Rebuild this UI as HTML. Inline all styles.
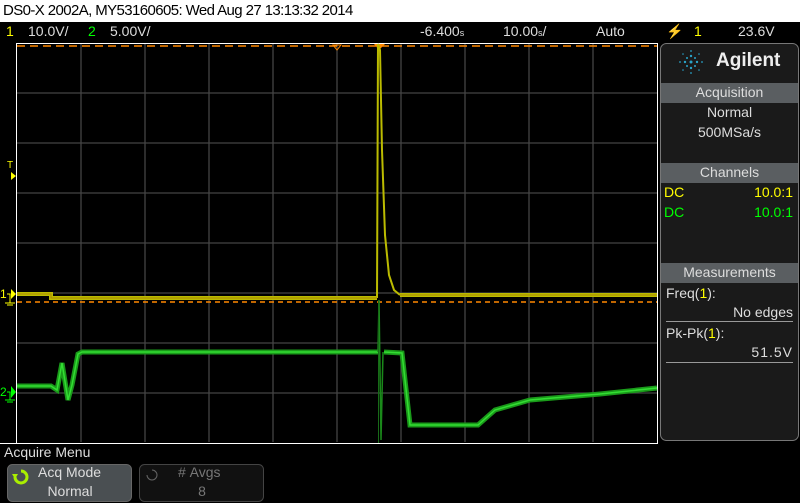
<!DOCTYPE html>
<html><head><style>
body{margin:0;width:800px;height:503px;background:#000;overflow:hidden;font-family:"Liberation Sans",sans-serif;position:relative}
.t{position:absolute;white-space:nowrap}
</style></head><body>
<div style="position:absolute;left:0;top:0;width:800px;height:22px;background:#fff"></div>
<div class="t" style="left:3px;top:2px;font-size:15px;color:#000;letter-spacing:-0.6px">DS0-X 2002A, MY53160605: Wed Aug 27 13:13:32 2014</div>
<div class="t" style="left:6px;top:23px;font-size:14px;color:#ff0">1</div>
<div class="t" style="left:28px;top:23px;font-size:14px;color:#ddd">10.0V/</div>
<div class="t" style="left:88px;top:23px;font-size:14px;color:#0f0">2</div>
<div class="t" style="left:110px;top:23px;font-size:14px;color:#ddd">5.00V/</div>
<div class="t" style="left:420px;top:23px;font-size:14px;color:#ddd">-6.400<span style="font-size:9px">s</span></div>
<div class="t" style="left:503px;top:23px;font-size:14px;color:#ddd">10.00<span style="font-size:9px">s</span>/</div>
<div class="t" style="left:596px;top:23px;font-size:14px;color:#ddd">Auto</div>
<div class="t" style="left:666px;top:23px;font-size:14px;color:#ddd">⚡</div>
<div class="t" style="left:694px;top:23px;font-size:14px;color:#ff0">1</div>
<div class="t" style="left:738px;top:23px;font-size:14px;color:#ddd">23.6V</div>
<svg width="800" height="503" style="position:absolute;left:0;top:0">
<g stroke="#444" stroke-width="1.3">
<line x1="81" y1="44" x2="81" y2="442"/><line x1="145" y1="44" x2="145" y2="442"/><line x1="209" y1="44" x2="209" y2="442"/><line x1="273" y1="44" x2="273" y2="442"/><line x1="401" y1="44" x2="401" y2="442"/><line x1="465" y1="44" x2="465" y2="442"/><line x1="529" y1="44" x2="529" y2="442"/><line x1="593" y1="44" x2="593" y2="442"/>
<line x1="337" y1="44" x2="337" y2="442"/>
<line x1="17" y1="93" x2="657" y2="93"/><line x1="17" y1="143" x2="657" y2="143"/><line x1="17" y1="193" x2="657" y2="193"/><line x1="17" y1="243" x2="657" y2="243"/><line x1="17" y1="293" x2="657" y2="293"/><line x1="17" y1="343" x2="657" y2="343"/><line x1="17" y1="393" x2="657" y2="393"/>
</g>
<line x1="16.5" y1="43" x2="16.5" y2="443" stroke="#fff"/>
<line x1="16" y1="43.5" x2="658" y2="43.5" stroke="#fff"/>
<line x1="0" y1="443.5" x2="658" y2="443.5" stroke="#fff"/>
<line x1="657.5" y1="43" x2="657.5" y2="443" stroke="#fff"/>
<line x1="17" y1="46" x2="657" y2="46" stroke="#f80" stroke-width="1.5" stroke-dasharray="8,5"/>
<line x1="17" y1="302" x2="657" y2="302" stroke="#f80" stroke-width="1.5" stroke-dasharray="5,4"/>
<path d="M333 45 L341 45 L337 50Z" fill="none" stroke="#f80"/>
<path d="M374 44 L385 44 L379 50Z" fill="#f80"/>
<path d="M17 294 L51 294 L51 298 L377 298 M400 295 L657 295" fill="none" stroke="#bb0" stroke-width="4"/>
<path d="M377 298 L378 44 L380 50 L382 150 L385 235 L389 275 L394 290 L400 295" fill="none" stroke="#bb0" stroke-width="2"/>
<path d="M17 294 L51 294 L51 298 L377 298 M400 295 L657 295" fill="none" stroke="#aa8a00" stroke-width="1"/>
<path d="M17 386 L51 386 L57 390 L62 363 L68 400 L72 385 L78 354 L82 352 L378 352 M384 352 L402 353 L410 425 L478 425 L495 410 L530 400 L600 394 L657 388" fill="none" stroke="#1a9a1a" stroke-width="5"/>
<path d="M17 386 L51 386 L57 390 L62 363 L68 400 L72 385 L78 354 L82 352 L378 352 M384 352 L402 353 L410 425 L478 425 L495 410 L530 400 L600 394 L657 388" fill="none" stroke="#3d3" stroke-width="1.5"/>
<path d="M378 352 L379 300 L381 440 L383 352" fill="none" stroke="#1a8a1a" stroke-width="1.5"/>
<line x1="378.5" y1="300" x2="378.5" y2="443" stroke="#186a18" stroke-width="1"/>
<path d="M11 289 L16 294 L11 299Z" fill="#ff0"/><path d="M7 294 H10 V303 M5 303 H15 M7 305 H13" stroke="#ff0" fill="none"/>
<text x="0" y="298" fill="#ff0" font-size="12" font-family="Liberation Sans">1</text>
<path d="M11 386 L16 392 L11 398Z" fill="#0f0"/><path d="M7 392 H10 V400 M5 400 H15 M7 402 H13" stroke="#0f0" fill="none"/>
<text x="0" y="396" fill="#0f0" font-size="12" font-family="Liberation Sans">2</text>
<text x="7" y="168" fill="#ff0" font-size="10" font-family="Liberation Sans">T</text>
<path d="M11 172 L16 176 L11 180Z" fill="#ff0"/>
<rect x="660.5" y="43.5" width="138" height="397" rx="6" fill="#1a1a1a" stroke="#777"/>
<rect x="661" y="83" width="137" height="20" fill="#5a5e61"/>
<rect x="661" y="163" width="137" height="20" fill="#5a5e61"/>
<rect x="661" y="263" width="137" height="20" fill="#5a5e61"/>
<line x1="666" y1="321.5" x2="793" y2="321.5" stroke="#999"/>
<line x1="666" y1="362.5" x2="793" y2="362.5" stroke="#999"/>
<g fill="#29a3c9"><circle cx="691" cy="62" r="1.5"/><circle cx="691" cy="56" r="1.2"/><circle cx="691" cy="68" r="1.2"/><circle cx="685" cy="62" r="1.2"/><circle cx="697" cy="62" r="1.2"/><circle cx="687" cy="58" r="1"/><circle cx="695" cy="58" r="1"/><circle cx="687" cy="66" r="1"/><circle cx="695" cy="66" r="1"/><circle cx="680" cy="62" r="0.9"/><circle cx="702" cy="62" r="0.9"/><circle cx="691" cy="51" r="0.9"/><circle cx="691" cy="73" r="0.9"/><circle cx="683" cy="54" r="0.8"/><circle cx="699" cy="54" r="0.8"/><circle cx="683" cy="70" r="0.8"/><circle cx="699" cy="70" r="0.8"/></g>
<rect x="7.5" y="464.5" width="124" height="37" rx="5" fill="#4a4f52" stroke="#666"/>
<rect x="139.5" y="464.5" width="124" height="37" rx="5" fill="#111" stroke="#444"/>
<path d="M21 471 A6 6 0 1 1 15 477" fill="none" stroke="#ae0" stroke-width="3"/>
<path d="M12 474 L18 474 L15 479Z" fill="#ae0"/>
<path d="M152 470 A5 5 0 1 1 147 475" fill="none" stroke="#666" stroke-width="1"/>
</svg>
<div class="t" style="left:716px;top:50px;font-size:19px;color:#eee;font-weight:bold">Agilent</div>
<div class="t" style="left:661px;top:84px;width:137px;text-align:center;font-size:14px;color:#ddd">Acquisition</div>
<div class="t" style="left:661px;top:104px;width:137px;text-align:center;font-size:14px;color:#ddd">Normal</div>
<div class="t" style="left:661px;top:124px;width:137px;text-align:center;font-size:14px;color:#ddd">500MSa/s</div>
<div class="t" style="left:661px;top:164px;width:137px;text-align:center;font-size:14px;color:#ddd">Channels</div>
<div class="t" style="left:664px;top:184px;font-size:14px;color:#ff0">DC</div>
<div class="t" style="right:7px;top:184px;font-size:14px;color:#ff0">10.0:1</div>
<div class="t" style="left:664px;top:204px;font-size:14px;color:#0f0">DC</div>
<div class="t" style="right:7px;top:204px;font-size:14px;color:#0f0">10.0:1</div>
<div class="t" style="left:661px;top:264px;width:137px;text-align:center;font-size:14px;color:#ddd">Measurements</div>
<div class="t" style="left:666px;top:285px;font-size:14px;color:#ddd">Freq(<span style="color:#ff0">1</span>):</div>
<div class="t" style="right:7px;top:304px;font-size:14px;color:#ddd">No edges</div>
<div class="t" style="left:666px;top:325px;font-size:14px;color:#ddd">Pk-Pk(<span style="color:#ff0">1</span>):</div>
<div class="t" style="right:7px;top:344px;font-size:14px;color:#ddd;letter-spacing:1px">51.5V</div>
<div class="t" style="left:4px;top:444px;font-size:14px;color:#ddd">Acquire Menu</div>
<div class="t" style="left:38px;top:464px;font-size:14px;color:#ddd">Acq Mode</div>
<div class="t" style="left:8px;top:483px;width:124px;text-align:center;font-size:14px;color:#ddd">Normal</div>
<div class="t" style="left:178px;top:464px;font-size:14px;color:#777">#&nbsp;Avgs</div>
<div class="t" style="left:140px;top:483px;width:124px;text-align:center;font-size:14px;color:#777">8</div>
</body></html>
